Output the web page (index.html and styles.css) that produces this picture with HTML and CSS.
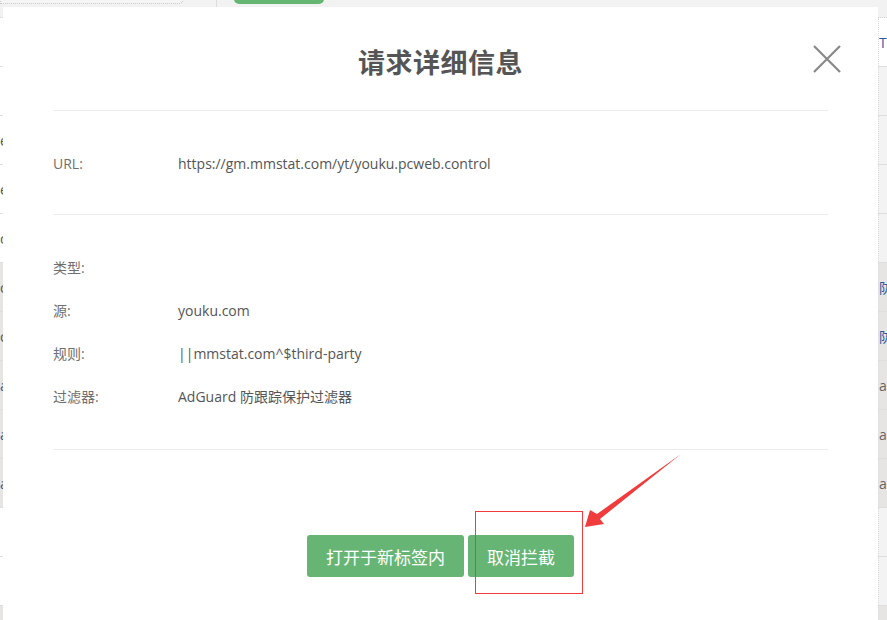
FILE: index.html
```html
<!DOCTYPE html>
<html lang="zh-CN">
<head>
<meta charset="utf-8">
<title>请求详细信息</title>
<link rel="stylesheet" href="styles.css">
</head>
<body>
<div class="page">
  <div class="toolbar">
    <div class="search"></div>
    <div class="sep"></div>
    <div class="tool-btn"></div>
  </div>
  <div class="table">
    <div class="row"><span class="c-left"></span><span class="c-right blue">T</span></div>
    <div class="row shade-r"><span class="c-left"></span><span class="c-right"></span></div>
    <div class="row shade-r"><span class="c-left">e</span><span class="c-right"></span></div>
    <div class="row shade-r"><span class="c-left">e</span><span class="c-right"></span></div>
    <div class="row shade-r"><span class="c-left">c</span><span class="c-right"></span></div>
    <div class="row gray"><span class="c-left">o</span><span class="c-right"><span class="blue">防</span><span class="red">拦</span></span></div>
    <div class="row gray"><span class="c-left">o</span><span class="c-right"><span class="blue">防</span><span class="red">拦</span></span></div>
    <div class="row gray"><span class="c-left blue">a</span><span class="c-right">ain</span></div>
    <div class="row gray"><span class="c-left blue">a</span><span class="c-right">ain</span></div>
    <div class="row gray"><span class="c-left blue">a</span><span class="c-right">ain</span></div>
    <div class="row shade-r"><span class="c-left">l</span><span class="c-right"></span></div>
    <div class="row shade-r"><span class="c-left">l</span><span class="c-right"></span></div>
    <div class="row gray"><span class="c-left"></span><span class="c-right"></span></div>
  </div>
</div>

<div class="modal">
  <div class="modal-header">
    <h2 class="modal-title">请求详细信息</h2>
    <button class="close" aria-label="关闭">
      <svg width="30" height="30" viewBox="0 0 30 30"><path d="M2 2 L28 28 M28 2 L2 28" stroke="#888" stroke-width="2.2" fill="none"/></svg>
    </button>
  </div>
  <div class="section url-section">
    <div class="field"><span class="label">URL:</span><span class="value">https://gm.mmstat.com/yt/youku.pcweb.control</span></div>
  </div>
  <div class="section details">
    <div class="field"><span class="label">类型:</span><span class="value"></span></div>
    <div class="field"><span class="label">源:</span><span class="value">youku.com</span></div>
    <div class="field"><span class="label">规则:</span><span class="value">||mmstat.com^$third-party</span></div>
    <div class="field"><span class="label">过滤器:</span><span class="value">AdGuard 防跟踪保护过滤器</span></div>
  </div>
  <div class="footer">
    <button class="btn">打开于新标签内</button>
    <button class="btn">取消拦截</button>
  </div>
</div>

<div class="annot-box"></div>
<svg class="annot-arrow" width="887" height="620" viewBox="0 0 887 620">
  <polygon points="585,527 590,510 597,514 681,454 600,519 604,524" fill="#f03c3c"/>
</svg>
</body>
</html>
```
FILE: styles.css
```css
* { box-sizing: border-box; }
html, body { margin: 0; padding: 0; }
body {
  width: 887px;
  height: 620px;
  overflow: hidden;
  background: #f2f2f2;
  font-family: "Open Sans", "Noto Sans CJK SC", sans-serif;
  color: #555;
}

/* background page */
.toolbar {
  height: 18px;
  display: flex;
  align-items: flex-end;
  background: #f2f2f2;
  border-bottom: 1px dotted #d6d6d6;
}
.search {
  width: 183px;
  height: 14px;
  margin-bottom: 13px;
  border: 1px dotted #c8c8c8;
  border-top: none;
  border-radius: 0 0 4px 0;
  background: #f5f5f5;
}
.sep {
  width: 1px;
  height: 18px;
  margin-left: 33px;
  background: #ddd;
}
.tool-btn {
  width: 90px;
  height: 14px;
  margin-left: 17px;
  margin-bottom: 13px;
  background: #65b673;
  border-radius: 0 0 5px 5px;
}
.table { font-size: 14px; }
.row {
  height: 49px;
  display: flex;
  align-items: center;
  justify-content: space-between;
  background: #fff;
  border-bottom: 1px solid #dedede;
}
.row.shade-r .c-right { background: #f3f3f3; }
.row.gray { background: #e7e5e4; }
.c-left {
  width: 6px;
  text-align: right;
  overflow: hidden;
  color: #555;
}
.c-right {
  width: 9px;
  height: 100%;
  display: flex;
  align-items: center;
  overflow: hidden;
  white-space: nowrap;
  color: #666;
  border-left: 1px dotted #ddd;
}
.blue { color: #2a5aa0; }
.red { color: #ef5a4a; }

/* modal */
.modal {
  position: fixed;
  left: 3px;
  top: 7px;
  width: 875px;
  height: 640px;
  background: #fff;
  padding: 0 50px;
}
.modal-header {
  position: relative;
  height: 104px;
  display: flex;
  align-items: center;
  justify-content: center;
  padding-top: 6px;
  border-bottom: 1px solid #ececec;
}
.modal-title {
  margin: 0;
  font-family: "Noto Sans CJK SC", sans-serif;
  font-size: 27px;
  font-weight: 700;
  color: #555;
  letter-spacing: 0.5px;
}
.close {
  position: absolute;
  right: -14px;
  top: 37px;
  width: 30px;
  height: 30px;
  padding: 0;
  border: none;
  background: none;
}
.close svg { display: block; }
.section { border-bottom: 1px solid #ececec; }
.url-section { padding: 43px 0 40px; }
.details {
  padding: 43px 0 42px;
  display: flex;
  flex-direction: column;
  gap: 23px;
}
.field {
  display: flex;
  height: 20px;
  line-height: 20px;
  font-size: 14px;
}
.label {
  width: 125px;
  color: #6f6f6f;
}
.value { color: #555; }
.footer {
  display: flex;
  justify-content: center;
  gap: 4px;
  padding-top: 85px;
}
.btn {
  height: 42px;
  padding: 0 19px;
  border: none;
  border-radius: 3px;
  background: #66b574;
  color: #fff;
  font-family: "Noto Sans CJK SC", sans-serif;
  font-size: 17px;
}

/* annotation overlay */
.annot-box {
  position: absolute;
  left: 475px;
  top: 511px;
  width: 108px;
  height: 83px;
  border: 1px solid #f03c3c;
}
.annot-arrow {
  position: absolute;
  left: 0;
  top: 0;
  pointer-events: none;
}
```
